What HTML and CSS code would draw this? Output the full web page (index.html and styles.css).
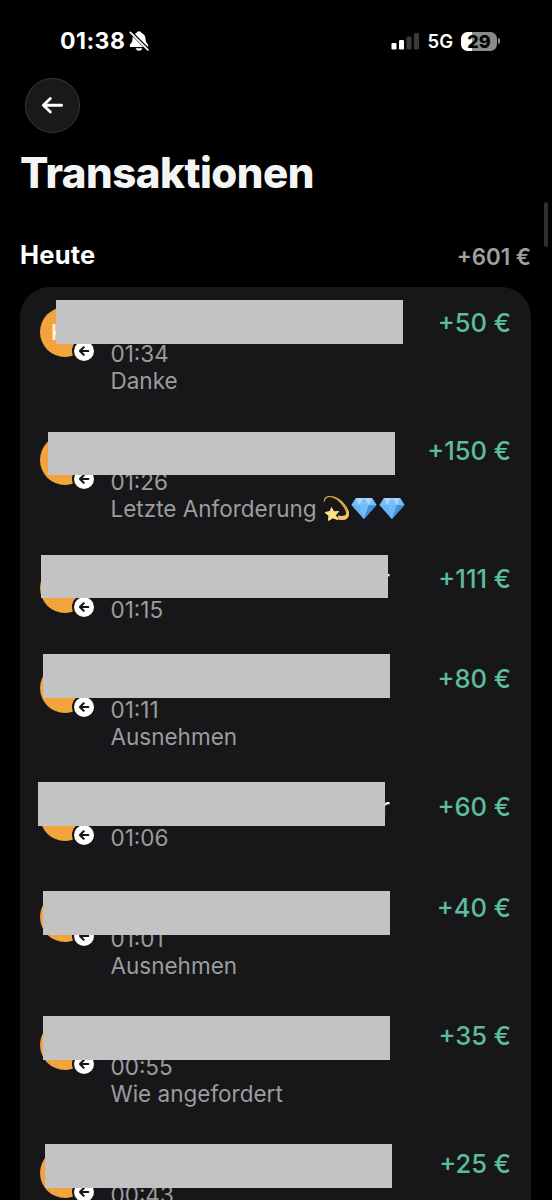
FILE: index.html
```html
<!DOCTYPE html>
<html lang="de">
<head>
<meta charset="utf-8">
<title>Transaktionen</title>
<link rel="stylesheet" href="styles.css">
</head>
<body>
<svg class="defs" aria-hidden="true">
  <symbol id="badge" viewBox="0 0 24 24">
    <circle cx="12" cy="12" r="12" fill="#171719"/>
    <circle cx="12" cy="12" r="10" fill="#fff"/>
    <path d="M16.300 12H8M11.700 8.300L8 12L11.700 15.700" fill="none" stroke="#171719" stroke-width="2.200" stroke-linecap="round" stroke-linejoin="round"/>
  </symbol>
  <symbol id="gem" viewBox="0 0 26 24">
    <path d="M5 2H21L25.500 9L13 23L.5 9Z" fill="#4aa5ef"/>
    <path d="M5 2H21L25.500 9H.5Z" fill="#79c0f6"/>
    <path d="M5 2L8 9L13 2L18 9L21 2Z" fill="#a5d8fc"/>
    <path d="M.5 9H8L13 23Z" fill="#63b5f5"/>
    <path d="M8 9H18L13 23Z" fill="#74bbf6"/>
    <path d="M18 9H25.500L13 23Z" fill="#3f90e0"/>
  </symbol>
</svg>
<div class="screen">
  <header class="status">
    <span class="clock">01:38</span>
    <svg class="bell" viewBox="0 0 20 20"><path d="M10 .3c-1.300 0-2.200.7-2.500 1.700C4.900 3 3.500 5.300 3.500 8c0 4-2.800 4.900-2.800 6.800 0 .8.600 1.200 1.300 1.200h16c.7 0 1.300-.4 1.300-1.200 0-1.900-2.800-2.800-2.800-6.800 0-2.700-1.400-5-4-6C12.200 1 11.300.3 10 .3ZM6.600 17.200c.4 1.500 1.700 2.500 3.400 2.500s3-1 3.400-2.500Z" fill="#fff"/><path d="M1.500 1L19.500 19" stroke="#000" stroke-width="3.400"/><path d="M1.300 1.300L18.900 18.900" stroke="#fff" stroke-width="1.700" stroke-linecap="round"/></svg>
    <span class="grow"></span>
    <svg class="signal" viewBox="0 0 28 18"><rect x=".5" y="11" width="5" height="6.500" rx="1.300" fill="#fff"/><rect x="8" y="8" width="5" height="9.500" rx="1.300" fill="#fff"/><rect x="15.500" y="4.500" width="5" height="13" rx="1.300" fill="#3a3a3a"/><rect x="23" y="1" width="5" height="16.500" rx="1.300" fill="#3a3a3a"/></svg>
    <span class="net">5G</span>
    <span class="battery">29</span><span class="tip"></span>
  </header>
  <button class="back" aria-label="Zurück"><svg viewBox="0 0 24 24"><path d="M22 12H2.500M10 4.700L2.500 12L10 19.300" fill="none" stroke="#fff" stroke-width="3" stroke-linecap="round" stroke-linejoin="round"/></svg></button>
  <h1>Transaktionen</h1>
  <div class="day"><h2>Heute</h2><span class="total">+601 €</span></div>
  <main class="card">
    <div class="row r1"><div class="avatar"><span class="initial">K</span><svg class="badge"><use href="#badge"/></svg></div><div class="info"><span class="name"></span><span>01:34</span><span>Danke</span></div><span class="amount">+50 €</span><span class="mask"></span></div>
    <div class="row r2"><div class="avatar"><svg class="badge"><use href="#badge"/></svg></div><div class="info"><span class="name"></span><span>01:26</span><span class="note">Letzte Anforderung
      <svg class="dizzy" viewBox="0 0 27 27"><path d="M1 8C0 3 3 .5 8 1c9 1 17.500 10 18 17.500.3 5-4 7.500-9.500 6.200 4.500.3 7-1.700 6.700-5.500C22.600 12.500 15 3.500 7.500 2 4 1.500 2 3.500 1 8Z" fill="#d5a746"/><path d="M24.500 14c.8 5-2.500 8-9 6.500l-2 3.500c6 2.500 12.500.5 12.500-5.500 0-1.500-.6-3-1.500-4.500Z" fill="#efc75e"/><path d="M8.500 12.500l2.200 4.300 5-.3-3.200 3.600 2 4.400-4.700-1.700-4.300 2.700.5-4.800L2 17.500l5-1Z" fill="#ffe08a" stroke="#ffe08a" stroke-linejoin="round"/></svg><svg class="gem"><use href="#gem"/></svg><svg class="gem"><use href="#gem"/></svg></span></div><span class="amount">+150 €</span><span class="mask"></span></div>
    <div class="row short r3"><div class="avatar"><svg class="badge"><use href="#badge"/></svg></div><div class="info"><span class="name">r</span><span>01:15</span></div><span class="amount">+111 €</span><span class="mask"></span></div>
    <div class="row r4"><div class="avatar"><svg class="badge"><use href="#badge"/></svg></div><div class="info"><span class="name"></span><span>01:11</span><span>Ausnehmen</span></div><span class="amount">+80 €</span><span class="mask"></span></div>
    <div class="row short r5"><div class="avatar"><svg class="badge"><use href="#badge"/></svg></div><div class="info"><span class="name">r</span><span>01:06</span></div><span class="amount">+60 €</span><span class="mask"></span></div>
    <div class="row r6"><div class="avatar"><svg class="badge"><use href="#badge"/></svg></div><div class="info"><span class="name"></span><span>01:01</span><span>Ausnehmen</span></div><span class="amount">+40 €</span><span class="mask"></span></div>
    <div class="row r7"><div class="avatar"><svg class="badge"><use href="#badge"/></svg></div><div class="info"><span class="name"></span><span>00:55</span><span>Wie angefordert</span></div><span class="amount">+35 €</span><span class="mask"></span></div>
    <div class="row r8"><div class="avatar"><svg class="badge"><use href="#badge"/></svg></div><div class="info"><span class="name"></span><span>00:43</span></div><span class="amount">+25 €</span><span class="mask"></span></div>
  </main>
  <div class="scrollbar"></div>
</div>
</body>
</html>
```
FILE: styles.css
```css
* { box-sizing: border-box; }
body { margin: 0; background: #000; color: #f4f4f4; font-family: Inter, "Liberation Sans", sans-serif; }
.defs { position: absolute; width: 0; height: 0; }
.screen { position: relative; width: 552px; height: 1200px; overflow: hidden; padding: 0 21px 0 20px; }
.status { display: flex; align-items: center; height: 78px; padding: 4px 31px 0 40px; }
.clock { font-size: 23px; font-weight: 750; line-height: 28px; letter-spacing: 0.5px; color: #fff; }
.bell { width: 20px; height: 20px; margin-left: 4px; }
.grow { flex: 1; }
.signal { width: 28px; height: 18px; }
.net { margin-left: 9px; font-size: 18.500px; font-weight: 600; color: #fff; }
.battery { width: 36px; height: 19px; margin-left: 8px; border-radius: 6.500px; background: linear-gradient(90deg, #fff 11px, #8a8a8a 11px); color: #000; font-size: 18px; font-weight: 800; line-height: 19px; text-align: center; }
.tip { width: 2px; height: 6px; margin-left: 1px; border-radius: 0 3px 3px 0; background: #8a8a8a; }
.back { display: flex; align-items: center; justify-content: center; width: 55px; height: 55px; margin-left: 5px; padding: 0; border: 1px solid #373737; border-radius: 50%; background: #191919; }
.back svg { width: 22.500px; height: 22.500px; }
h1 { margin: 14px 0 0; font-size: 42px; font-weight: 800; line-height: 52px; letter-spacing: -0.5px; }
.day { display: flex; align-items: center; justify-content: space-between; height: 32px; margin-top: 40px; }
h2 { margin: 0; font-size: 25.500px; font-weight: 700; line-height: 32px; letter-spacing: 0.2px; color: #fff; }
.total { padding-top: 4px; font-size: 22.300px; font-weight: 600; line-height: 28px; color: #a0a0a2; }
.card { margin-top: 15.500px; border-radius: 30px 30px 0 0; background: #171719; height: 940px; }
.row { position: relative; display: flex; height: 128px; padding: 20px 20px 0; }
.row.short { height: 100.500px; }
.avatar { position: relative; flex: none; width: 50px; height: 50px; border-radius: 50%; background: #f2a33c; }
.initial { position: absolute; left: 11px; top: 11px; font-size: 22px; font-weight: 600; line-height: 28px; color: #fff0d4; }
.badge { position: absolute; left: 32px; top: 32px; width: 24px; height: 24px; }
.info { display: flex; flex-direction: column; flex: 1; margin-left: 20.500px; color: #9c9c9e; font-size: 22.500px; font-weight: 430; line-height: 27.300px; }
.name { width: 279.500px; height: 33px; text-align: right; color: #fff; font-size: 25px; line-height: 33px; }
.note { display: flex; align-items: center; white-space: nowrap; }
.dizzy { width: 27px; height: 27px; margin-left: 6.500px; }
.gem { width: 26px; height: 24px; margin-left: 1.300px; }
.amount { flex: none; font-size: 25.500px; font-weight: 450; line-height: 32px; color: #5bbd9b; }
.mask { position: absolute; width: 347px; height: 43.500px; background: #c3c3c3; }
.r1 .mask { left: 36.300px; top: 13.500px; }
.r2 .mask { left: 28.300px; top: 17.300px; }
.r3 .mask { left: 21.300px; top: 12.300px; }
.r4 .mask { left: 23.400px; top: 11px; }
.r5 .mask { left: 18.300px; top: 11px; }
.r6 .mask { left: 23px; top: 19.700px; }
.r7 .mask { left: 23.400px; top: 16.500px; }
.r8 .mask { left: 25px; top: 16.500px; }
.scrollbar { position: absolute; right: 4px; top: 202px; width: 4px; height: 45px; border-radius: 2px; background: #303030; }
```
